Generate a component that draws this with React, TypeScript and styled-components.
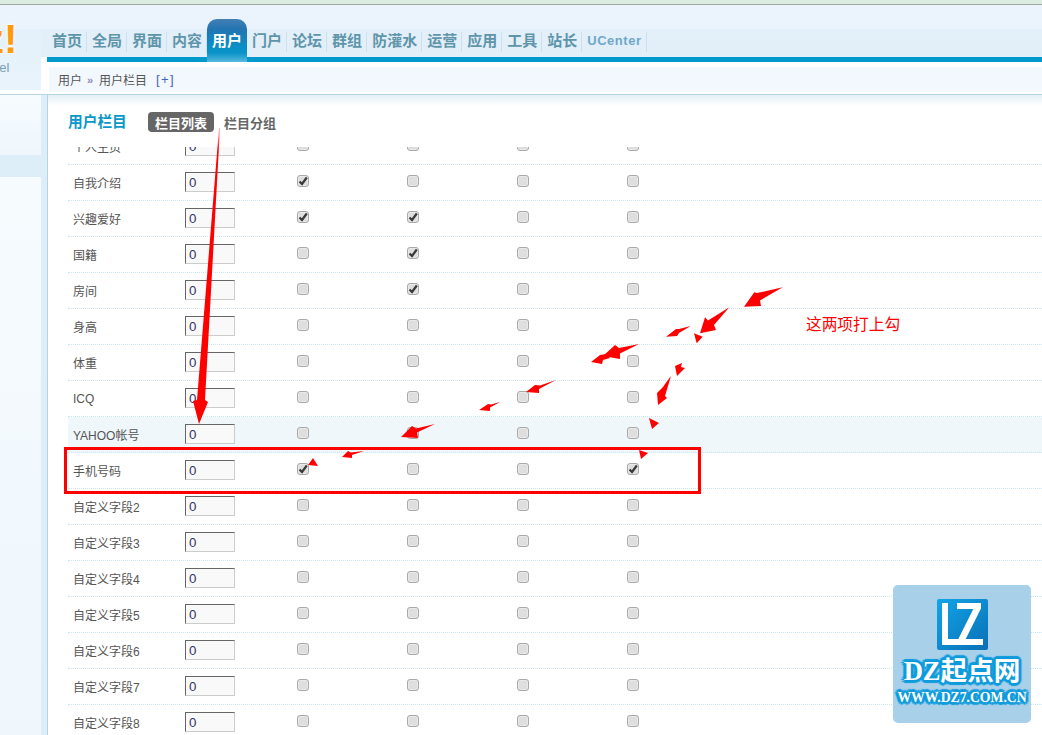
import React from 'react';
import styled, { createGlobalStyle } from 'styled-components';

const Global = createGlobalStyle`
  html, body { margin: 0; padding: 0; background: #fff; }
  * { box-sizing: border-box; }
`;
const CJK = `"Liberation Sans", "Noto Sans CJK SC", sans-serif`;

const Page = styled.div`
  position: relative; width: 1042px; height: 735px; overflow: hidden;
  display: flex; flex-direction: column; background: #fff; font-family: ${CJK};
`;
const TopStrip = styled.div`
  height: 5px; flex: none; background: #d9ecdf; border-bottom: 1px solid #a3a6a6;
`;
const Shell = styled.div`
  flex: 1; min-height: 0; display: flex;
`;
const Sidebar = styled.aside`
  width: 47px; flex: none; display: flex; flex-direction: column;
  background: linear-gradient(#ebf4fc 0, #ebf4fc 24px, #e3eff9 24px, #e2eff9 52px, #fff 52px);
`;
const LogoBlock = styled.div`
  width: 41px; height: 85px; flex: none; overflow: hidden;
  background: linear-gradient(#ebf4fc 0, #ebf4fc 24px, #e5f1fa 24px, #e8f3fb 85px);
`;
const LogoMark = styled.div`
  margin: 14px 0 0 -16px; font: bold 40px/40px "Liberation Sans", sans-serif; color: #ff9a0c;
  text-shadow: 0 0 3px #fff, 0 0 3px #fff;
  white-space: nowrap;
`;
const LogoSub = styled.div`
  margin: 2px 0 0 -8px; font-size: 13px; line-height: 13px; color: #7a9fb0; white-space: nowrap;
`;
const SideGap = styled.div`
  height: 4px; flex: none; background: #fff;
`;
const SideRule = styled.div`
  height: 1px; flex: none; background: #b5d3e0;
`;
const SideBody = styled.div`
  flex: 1; background: #deeef9; display: flex; flex-direction: column;
`;
const SidePanel = styled.div<{ $h?: number }>`
  width: 41px; flex: ${p => (p.$h ? 'none' : '1')}; height: ${p => (p.$h ? `${p.$h}px` : 'auto')};
  background: linear-gradient(#f6fbfe, #eff7fd);
`;
const SideActive = styled.div`
  height: 22px; flex: none;
`;
const Main = styled.main`
  flex: 1; display: flex; flex-direction: column; min-width: 0;
`;
const Header = styled.header`
  flex: none; height: 52px; display: flex; align-items: flex-end;
  background: linear-gradient(#ebf4fc 0, #ebf4fc 24px, #e3eff9 24px, #e2eff9 100%);
`;
const NavItem = styled.a<{ $active?: boolean; $latin?: boolean }>`
  display: flex; align-items: ${p => (p.$active ? 'flex-start' : 'center')}; justify-content: center;
  padding: ${p => (p.$active ? '13px 5px 0' : '0 5px 4px')};
  height: ${p => (p.$active ? '43px' : '28px')};
  font-size: ${p => (p.$latin ? '13px' : '15px')}; line-height: 18px; font-weight: 700;
  letter-spacing: ${p => (p.$latin ? '.55px' : '0')};
  color: ${p => (p.$active ? '#fff' : p.$latin ? '#70a8c8' : '#5f95aa')};
  border-radius: ${p => (p.$active ? '10px 10px 0 0' : '0')};
  background: ${p => (p.$active ? 'linear-gradient(#4480b6 0, #2274b2 10px, #0a8fc6 28px, #0a93c9 34px, #58b9dd 43px)' : 'none')};
  margin-bottom: ${p => (p.$active ? '-5px' : '0')};
  position: relative; z-index: 1;
  &::after {
    content: ''; position: absolute; right: 0; top: 3px; bottom: 5px; width: 1px;
    background: ${p => (p.$active ? 'transparent' : '#cfe0ec')};
  }
`;
const BlueBar = styled.div`
  height: 5px; flex: none; background: #0099cc;
`;
const CrumbWrap = styled.div`
  height: 33px; flex: none; padding: 5px 0 2px 2px; background: #fff; border-bottom: 1px solid #b5d3e0;
`;
const Crumb = styled.div`
  height: 25px; background: #f2f8fd; display: flex; align-items: center; padding-left: 9px;
  font-size: 12px; color: #555;
`;
const Chev = styled.span`
  margin: 0 6px 0 5px; width: 6px; color: #7d8fb0; font-size: 11px; font-weight: 700;
`;
const Plus = styled.span`
  margin-left: 9px; font-size: 13px; color: #4766b4; letter-spacing: 1.4px;
`;
const Content = styled.div`
  flex: 1; min-height: 0; display: flex; flex-direction: column; border-left: 1px solid #b5d3e0;
  background: linear-gradient(#e3f0f6 0, #fff 11px) no-repeat;
  background-size: 100% 12px; background-color: #fff;
`;
const TitleRow = styled.div`
  height: 52px; flex: none; display: flex; align-items: flex-start; padding: 17px 0 0 20px;
`;
const Title = styled.h1`
  margin: 0; width: 80px; font-size: 14.7px; line-height: 20px; font-weight: 700; color: #0b98c9;
`;
const TabOn = styled.span`
  width: 66px; height: 20px; border-radius: 4px; background: #666; color: #fff;
  display: flex; align-items: center; justify-content: center; font-size: 13px; font-weight: 700;
`;
const TabOff = styled.span`
  margin-left: 10px; height: 20px; display: flex; align-items: center; font-size: 13px; font-weight: 700; color: #666;
`;
const Clip = styled.div`
  flex: 1; min-height: 0; overflow: hidden; padding-left: 20px;
`;
const List = styled.div`
  margin-top: -18px;
`;
const Row = styled.div<{ $hl?: boolean }>`
  height: 36px; display: grid; grid-template-columns: 112px 110px repeat(4, 110px) 1fr; align-items: center;
  border-bottom: 1px dotted #c6e5f6; background: ${p => (p.$hl ? '#f0f7fb' : 'transparent')};
`;
const Label = styled.div`
  padding: 0 0 0 5px; font-size: 12px; color: #555; white-space: nowrap;
`;
const InputCell = styled.div`
  padding: 0 0 2px 5px;
`;
const NumBox = styled.input`
  display: block; width: 50px; height: 20px; margin: 0; padding: 2px 0 0 3px; font: 13.3px "Liberation Sans", sans-serif; color: #336;
  background: #f9f9f9; border: 1px solid; border-color: #666 #ccc #ccc #666; border-radius: 0; outline: none;
`;
const CheckCell = styled.div`
  padding: 0 0 3px 7px;
`;
const Check = styled.span`
  display: block; width: 12px; height: 12px; border: 1px solid #a9a9a9; border-radius: 3px; background: #dedede;
  box-shadow: inset 0 0 0 1px #e9e9e9;
  svg { display: block; width: 10px; height: 10px; }
`;
const Overlay = styled.svg`
  position: absolute; inset: 0; pointer-events: none;
`;
const Note = styled.div`
  position: absolute; left: 806px; top: 315px; font-size: 15.7px; line-height: 20px; color: #f00;
`;
const Badge = styled.div`
  position: absolute; left: 893px; top: 585px; width: 138px; height: 138px; border-radius: 5px; background: #a9d0e9;
  display: flex; flex-direction: column; align-items: center; padding-top: 14px;
`;
const BadgeMark = styled.svg`
  width: 51px; height: 51px; flex: none; display: block;
`;
const outline = '2px 0 1px #109bdc, -2px 0 1px #109bdc, 0 2px 1px #109bdc, 0 -2px 1px #109bdc, 2px 2px 1px #109bdc, -2px -2px 1px #109bdc, 2px -2px 1px #109bdc, -2px 2px 1px #109bdc, 3px 0 1px #109bdc, -3px 0 1px #109bdc, 0 3px 1px #109bdc, 0 -3px 1px #109bdc';
const BadgeName = styled.div`
  margin-top: 7px; font: 700 26.6px/28px "Liberation Serif", "Noto Sans CJK SC", serif; color: #fff; white-space: nowrap;
  text-shadow: ${outline};
`;
const BadgeUrl = styled.div`
  margin-top: 4px; font: 700 13.7px/17px "Liberation Serif", serif; color: #fff; white-space: nowrap;
  text-shadow: ${outline};
`;

const navItems = ['首页', '全局', '界面', '内容', '用户', '门户', '论坛', '群组', '防灌水', '运营', '应用', '工具', '站长'];
const rows: [string, number[]][] = [
  ['个人主页', []], ['自我介绍', [0]], ['兴趣爱好', [0, 1]], ['国籍', [1]], ['房间', [1]], ['身高', []], ['体重', []],
  ['ICQ', []], ['YAHOO帐号', []], ['手机号码', [0, 3]], ['自定义字段2', []], ['自定义字段3', []], ['自定义字段4', []],
  ['自定义字段5', []], ['自定义字段6', []], ['自定义字段7', []], ['自定义字段8', []],
];
const arrows = [
  '782.7,287.3 757,293 754.3,292.3 744,306.7 761,306 760,300.5',
  '729.3,307.3 708,320.5 705,317.3 700,333.3 716,330 714,325',
  '690.7,326 679,329 676,329 666,336.7 677,336 679,333',
  '694,333.3 702.7,336.7 696.7,343.3',
  '639,344 619,348 615,345 603,356 620,359 620,353.5',
  '606,354 600,355 591,362 602,364 603,360 610,358',
  '682,363 675,366 677,376 685,368 681,367',
  '671,376 665,384 663,387 657,393 658,405 667,398 665,396',
  '556,380 540,385.5 535,385 526,392 539,393 539,389',
  '500,402 491,404.5 488,404 479,410 490,411 490,407.5',
  '649,418 659,423 652,429',
  '639,450 648,453 641,459',
  '435,424 416,428.5 412,426 401,437 418,438 417,432.5',
  '364,451 351,452.5 348,451 342,457 352,458 352,455',
  '313,458 318,466 308,465',
];

export default function App() {
  return (
    <Page>
      <Global />
      <TopStrip />
      <Shell>
        <Sidebar>
          <LogoBlock>
            <LogoMark>z!</LogoMark>
            <LogoSub>nel</LogoSub>
          </LogoBlock>
          <SideGap />
          <SideRule />
          <SideBody>
            <SidePanel $h={60} />
            <SideActive />
            <SidePanel />
          </SideBody>
        </Sidebar>
        <Main>
          <Header>
            {navItems.map(n => <NavItem key={n} $active={n === '用户'}>{n}</NavItem>)}
            <NavItem $latin>UCenter</NavItem>
          </Header>
          <BlueBar />
          <CrumbWrap>
            <Crumb>用户<Chev>»</Chev>用户栏目<Plus>[+]</Plus></Crumb>
          </CrumbWrap>
          <Content>
            <TitleRow>
              <Title>用户栏目</Title>
              <TabOn>栏目列表</TabOn>
              <TabOff>栏目分组</TabOff>
            </TitleRow>
            <Clip>
              <List>
                {rows.map(([name, on]) => (
                  <Row key={name} $hl={name === 'YAHOO帐号'}>
                    <Label>{name}</Label>
                    <InputCell><NumBox readOnly value="0" /></InputCell>
                    {[0, 1, 2, 3].map(i => (
                      <CheckCell key={i}>
                        <Check>
                          {on.includes(i) && (
                            <svg viewBox="0 0 10 10"><path d="M1.5 5.5 L4 8 L8.8 1.5" fill="none" stroke="#3a3a3a" strokeWidth="2.2" /></svg>
                          )}
                        </Check>
                      </CheckCell>
                    ))}
                  </Row>
                ))}
              </List>
            </Clip>
          </Content>
        </Main>
      </Shell>
      <Overlay width="1042" height="735" viewBox="0 0 1042 735">
        <defs>
          <linearGradient id="fade" gradientUnits="userSpaceOnUse" x1="0" x2="0" y1="128" y2="150">
            <stop offset="0" stopColor="#ffc0c0" />
            <stop offset="1" stopColor="#f00" />
          </linearGradient>
        </defs>
        <polygon points="219,128 220,128 205,400 208,402 199,424 193,401 197,400" fill="url(#fade)" />
        {arrows.map(p => <polygon key={p} points={p} fill="#f00" />)}
        <rect x="65.5" y="448.5" width="634" height="44" fill="none" stroke="#f00" strokeWidth="3" />
      </Overlay>
      <Note>这两项打上勾</Note>
      <Badge>
        <BadgeMark viewBox="0 0 51 51">
          <defs>
            <linearGradient id="lz" x1="0" x2="1" y1="0" y2="1">
              <stop offset="0" stopColor="#12a5e8" />
              <stop offset="1" stopColor="#0a6fb5" />
            </linearGradient>
          </defs>
          <rect width="51" height="51" rx="2" fill="url(#lz)" />
          <rect x="5" y="4" width="6" height="42" fill="#fff" />
          <rect x="5" y="40" width="16" height="6" fill="#fff" />
          <rect x="20" y="4" width="24" height="6" fill="#fff" />
          <line x1="41" y1="8" x2="24" y2="42" stroke="#fff" strokeWidth="6.5" />
          <rect x="20" y="40" width="26" height="6" fill="#fff" />
        </BadgeMark>
        <BadgeName>DZ起点网</BadgeName>
        <BadgeUrl>WWW.DZ7.COM.CN</BadgeUrl>
      </Badge>
    </Page>
  );
}
